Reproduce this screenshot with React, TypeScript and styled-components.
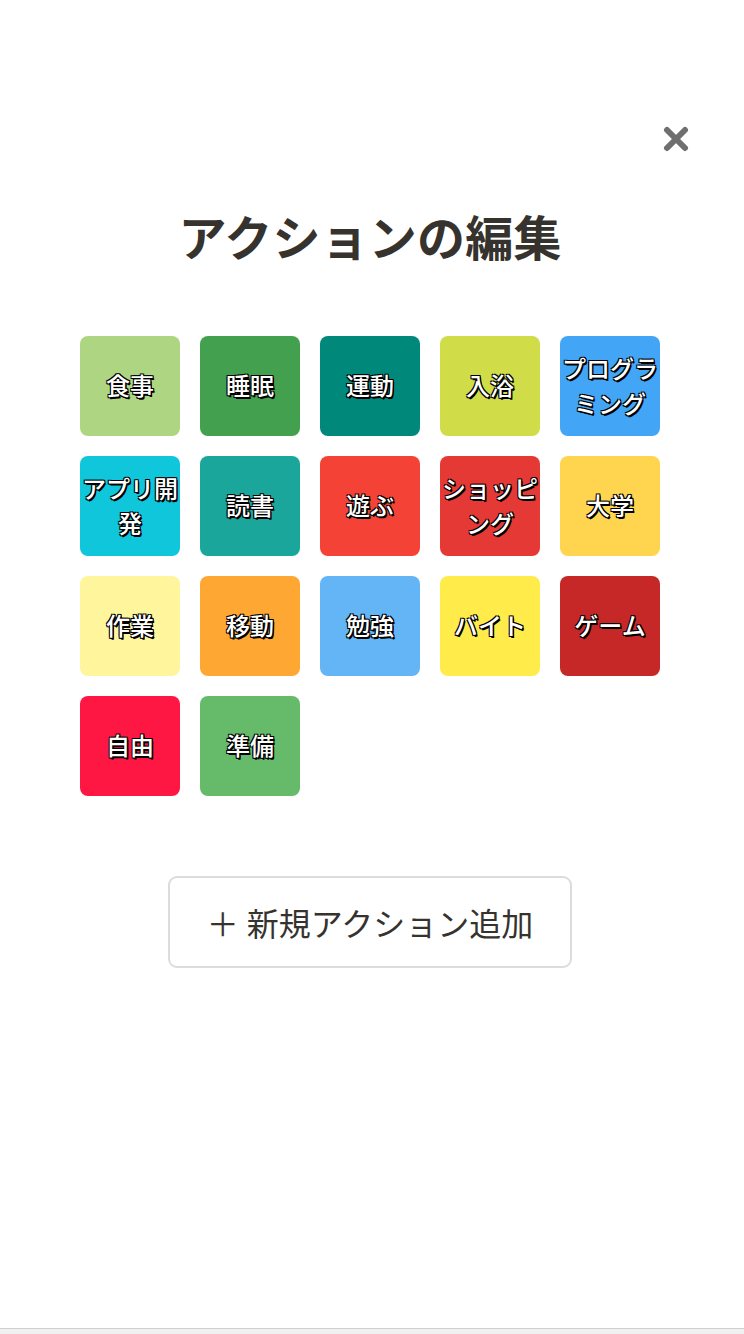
import React from "react";
import styled, { createGlobalStyle } from "styled-components";

const Global = createGlobalStyle`
  html, body { margin: 0; padding: 0; background: #fff; }
  body { font-family: "Noto Sans CJK JP", "Noto Sans", sans-serif; }
`;

const Page = styled.div`
  width: 744px;
  height: 1334px;
  display: flex;
  flex-direction: column;
  box-sizing: border-box;
`;

const Main = styled.div`
  flex: 1;
  display: flex;
  flex-direction: column;
  align-items: center;
  padding-right: 4px;
`;

const Header = styled.div`
  align-self: stretch;
  display: flex;
  justify-content: flex-end;
  padding: 126px 51px 0 0;
`;

const CloseButton = styled.button`
  width: 26px;
  height: 26px;
  padding: 0;
  border: none;
  background: none;
  display: flex;
  align-items: center;
  justify-content: center;
  cursor: pointer;
`;

const Title = styled.h1`
  margin: 51px 0 0;
  font-size: 48px;
  line-height: 64px;
  font-weight: 700;
  color: #36332e;
  letter-spacing: 0.2px;
`;

const Grid = styled.div`
  margin-top: 69px;
  display: grid;
  grid-template-columns: repeat(5, 100px);
  gap: 20px;
  width: 580px;
`;

const Tile = styled.div<{ $bg: string }>`
  width: 100px;
  height: 100px;
  box-sizing: border-box;
  padding-bottom: 3px;
  border-radius: 8px;
  background: ${(p) => p.$bg};
  display: flex;
  align-items: center;
  justify-content: center;
  text-align: center;
  color: #fff;
  font-size: 24px;
  line-height: 35px;
  font-weight: 500;
  word-break: break-all;
  text-shadow: 1px 1px 0 #000, -1px -1px 0 #000, 1px -1px 0 #000, -1px 1px 0 #000,
    1.5px 1.5px 0 #000, 0 1px 0 #000, 1px 0 0 #000;
`;

const AddButton = styled.button`
  margin-top: 80px;
  width: 404px;
  height: 92px;
  border: 2px solid #dcdcdc;
  border-radius: 9px;
  background: #fff;
  font-family: "Noto Sans CJK JP", "Noto Sans", sans-serif;
  font-size: 32px;
  color: #36332e;
  display: flex;
  align-items: center;
  justify-content: center;
  gap: 8px;
  padding: 0;
`;

const Footer = styled.div`
  height: 5px;
  border-top: 1px solid #cfcfcf;
  background: #f0f0f0;
`;

const actions: { name: string; color: string }[] = [
  { name: "食事", color: "#aed581" },
  { name: "睡眠", color: "#43a04e" },
  { name: "運動", color: "#00897b" },
  { name: "入浴", color: "#d0dc48" },
  { name: "プログラミング", color: "#42a5f5" },
  { name: "アプリ開発", color: "#0fc6da" },
  { name: "読書", color: "#1aa69a" },
  { name: "遊ぶ", color: "#f44336" },
  { name: "ショッピング", color: "#e53935" },
  { name: "大学", color: "#ffd54f" },
  { name: "作業", color: "#fff59d" },
  { name: "移動", color: "#ffa733" },
  { name: "勉強", color: "#64b5f6" },
  { name: "バイト", color: "#ffeb4a" },
  { name: "ゲーム", color: "#c62828" },
  { name: "自由", color: "#ff1744" },
  { name: "準備", color: "#66bb6a" },
];

export default function App() {
  return (
    <Page>
      <Global />
      <Main>
        <Header>
          <CloseButton aria-label="close">
            <svg width="26" height="26" viewBox="0 0 26 26">
              <path
                d="M4 4 L22 22 M22 4 L4 22"
                stroke="#6f6f6f"
                strokeWidth="6"
                strokeLinecap="round"
              />
            </svg>
          </CloseButton>
        </Header>
        <Title>アクションの編集</Title>
        <Grid>
          {actions.map((a) => (
            <Tile key={a.name} $bg={a.color}>
              {a.name}
            </Tile>
          ))}
        </Grid>
        <AddButton>
          <span>＋</span>
          <span>新規アクション追加</span>
        </AddButton>
      </Main>
      <Footer />
    </Page>
  );
}
